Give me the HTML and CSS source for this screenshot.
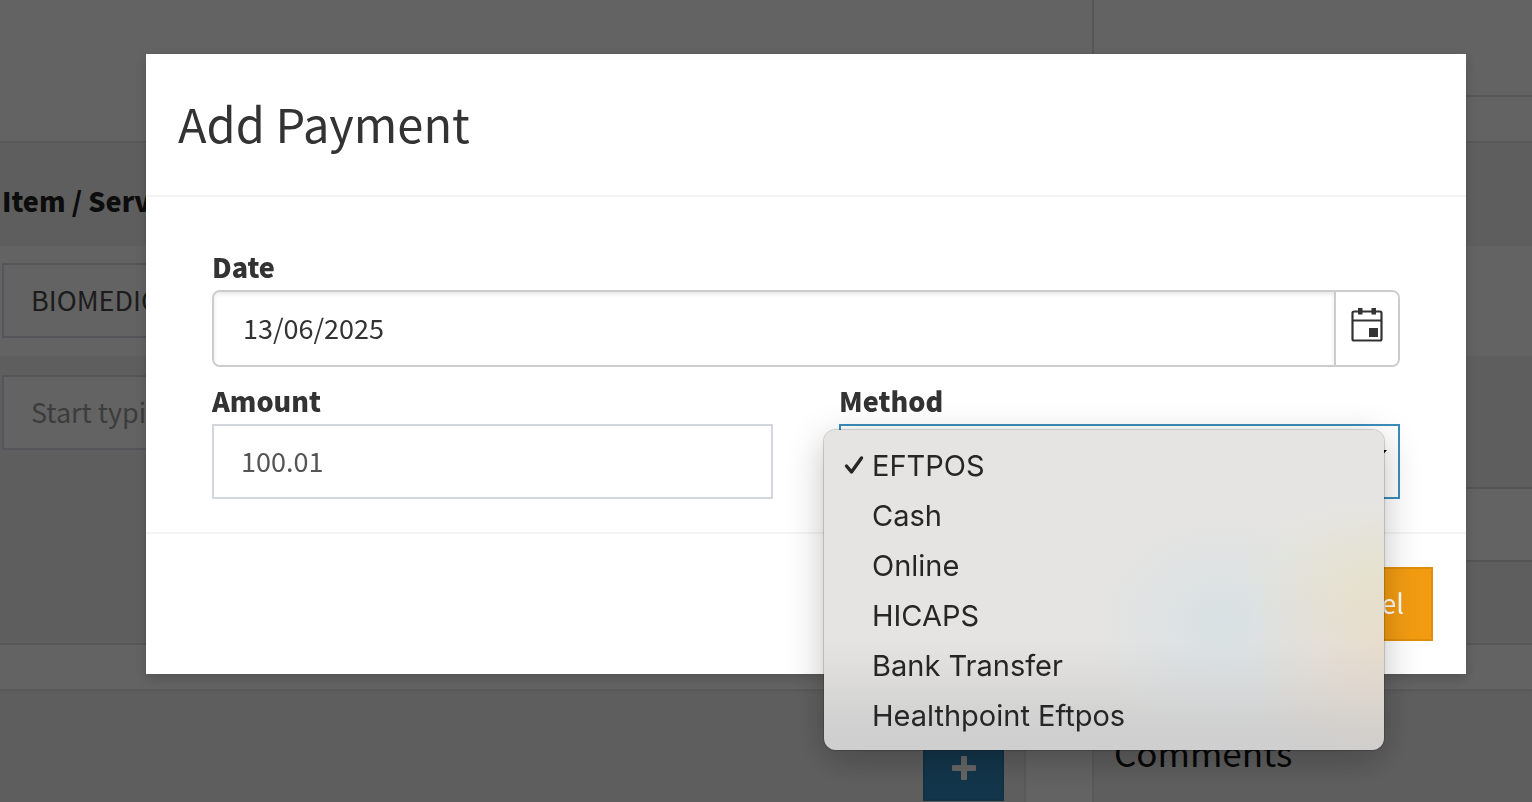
FILE: index.html
```html
<!DOCTYPE html>
<html lang="en">
<head>
  <meta charset="UTF-8">
  <meta name="viewport" content="width=device-width, initial-scale=1.0">
  <title>Invoice - Add Payment</title>
  <link rel="stylesheet" href="styles.css">
</head>
<body>
  <div class="page">
    <div class="top-row">
      <div class="top-main"></div>
      <div class="top-side">
        <div class="top-side-body"></div>
      </div>
    </div>

    <table class="items">
      <thead>
        <tr><th scope="col">Item / Service</th></tr>
      </thead>
      <tbody>
        <tr><td><input type="text" class="item-input" aria-label="Item 1" value="BIOMEDICA"></td></tr>
        <tr><td><input type="text" class="item-input" aria-label="Item 2" placeholder="Start typing"></td></tr>
      </tbody>
    </table>
    <div class="totals">
      <div class="total-row shaded"></div>
      <div class="total-row"></div>
    </div>

    <div class="bottom-row">
      <div class="panel panel-main">
        <button type="button" class="add-btn" aria-label="Add">
          <svg width="26" height="26" viewBox="0 0 26 26"><path d="M11 1h4a1 1 0 0 1 1 1v8h8a1 1 0 0 1 1 1v4a1 1 0 0 1-1 1h-8v8a1 1 0 0 1-1 1h-4a1 1 0 0 1-1-1v-8H2a1 1 0 0 1-1-1v-4a1 1 0 0 1 1-1h8V2a1 1 0 0 1 1-1z" fill="#fff"/></svg>
        </button>
      </div>
      <div class="panel panel-side">
        <h3>Comments</h3>
      </div>
    </div>
  </div>

  <div class="overlay">
    <div class="modal" role="dialog" aria-labelledby="modal-title">
      <div class="modal-header">
        <h2 id="modal-title">Add Payment</h2>
      </div>
      <div class="modal-body">
        <div class="field">
          <label for="date">Date</label>
          <div class="date-group">
            <input type="text" id="date" value="13/06/2025">
            <button type="button" aria-label="Open calendar">
              <svg width="32" height="34" viewBox="0 0 32 34">
                <rect x="1.500" y="3.500" width="29" height="29" rx="1.500" fill="none" stroke="#333" stroke-width="2.200"/>
                <path d="M1 12.500h30" stroke="#333" stroke-width="2.200"/>
                <path d="M7 0h4.500v6.500H7zM20.500 0H25v6.500h-4.500zM18 20h9v9h-9z" fill="#333"/>
              </svg>
            </button>
          </div>
        </div>
        <div class="field-row">
          <div class="field">
            <label for="amount">Amount</label>
            <input type="text" id="amount" class="control" value="100.01">
          </div>
          <div class="field method">
            <label for="method">Method</label>
            <div class="select-wrap">
              <select id="method" class="control">
                <option>EFTPOS</option>
                <option>Cash</option>
                <option>Online</option>
                <option>HICAPS</option>
                <option>Bank Transfer</option>
                <option>Healthpoint Eftpos</option>
              </select>
              <svg class="arrow" width="16" height="9" viewBox="0 0 16 9"><path d="M0 0h16L8 9z" fill="#000"/></svg>
              <ul class="menu" role="listbox" aria-label="Method">
                <li role="option" aria-selected="true">
                  <svg class="check" width="20" height="20" viewBox="0 0 20 20"><path d="M2.500 11l5 6L17.500 3" fill="none" stroke="#262626" stroke-width="3.400" stroke-linecap="round" stroke-linejoin="round"/></svg>
                  EFTPOS
                </li>
                <li role="option">Cash</li>
                <li role="option">Online</li>
                <li role="option">HICAPS</li>
                <li role="option">Bank Transfer</li>
                <li role="option">Healthpoint Eftpos</li>
              </ul>
            </div>
          </div>
        </div>
      </div>
      <div class="modal-footer">
        <button type="button" class="cancel-btn">Cancel</button>
      </div>
    </div>
  </div>
</body>
</html>
```

FILE: styles.css
```css
* {
  margin: 0;
  padding: 0;
  box-sizing: border-box;
}

body {
  font-family: "Source Sans Pro", "Noto Sans CJK SC", sans-serif;
  font-size: 27px;
  line-height: 42px;
  color: #333;
  background: #f8f8f8;
  overflow: hidden;
}

input, button, select {
  font: inherit;
  color: inherit;
  border-radius: 0;
}

/* Invoice page */
.page {
  height: 100vh;
  display: flex;
  flex-direction: column;
}

.top-row {
  display: flex;
  height: 143px;
  flex-shrink: 0;
  border-bottom: 2px solid #dedede;
}

.top-main {
  flex: 1;
}

.top-side {
  width: 440px;
  border-left: 2px solid #d8d8d8;
}

.top-side-body {
  height: 97px;
  border-bottom: 2px solid #d8d8d8;
}

.items {
  width: 100%;
  border-collapse: collapse;
  background: #ececec;
}

.items th {
  height: 103px;
  padding: 12px 2px 0;
  text-align: left;
  font-weight: 900;
  color: #202020;
}

.items td {
  height: 110px;
  padding: 17px 2px 0;
  vertical-align: top;
}

.items tbody tr:first-child {
  background: #f8f8f8;
}

.items tbody tr:last-child td {
  padding-top: 19px;
}

.item-input {
  display: block;
  width: 40%;
  height: 75px;
  padding: 0 27px 2px;
  border: 2px solid #d2d6de;
  background: #f8f8f8;
  color: #484848;
}

.item-input::placeholder {
  color: #969696;
}

.totals {
  display: flex;
  flex-direction: column;
  align-items: flex-end;
  padding-top: 21px;
  background: #ececec;
  border-bottom: 2px solid #dadada;
}

.total-row {
  width: 30%;
  height: 73px;
  border-top: 2px solid #d2d3d8;
}

.total-row.shaded {
  background: #f8f8f8;
}

.total-row:last-child {
  height: 83px;
}

.bottom-row {
  flex: 1;
  display: flex;
  gap: 66px;
  margin-top: 44px;
}

.panel {
  background: #ececec;
  border-top: 2px solid #dedede;
  box-shadow: inset 0 2px 2px rgba(0, 0, 0, 0.03);
}

.panel-main {
  flex: 1;
  padding: 36px 20px 0;
  border-right: 2px solid #e0e0e0;
  text-align: right;
}

.panel-side {
  width: 440px;
  padding: 36px 20px 0;
  border-left: 2px solid #e0e0e0;
}

.panel-side h3 {
  font-size: 35px;
  font-weight: 400;
  line-height: 50px;
  color: #101010;
}

.add-btn {
  width: 81px;
  height: 74px;
  border: 2px solid #2c7aac;
  background: #3086bb;
}

.add-btn svg {
  vertical-align: middle;
}

/* Modal */
.overlay {
  position: fixed;
  inset: 0;
  padding: 54px 66px 0 146px;
  background: rgba(0, 0, 0, 0.6);
}

.modal {
  background: #fff;
  box-shadow: 0 4px 12px rgba(0, 0, 0, 0.2);
}

.modal-header {
  padding: 34px 32px 37px;
  border-bottom: 2px solid #f4f4f4;
}

.modal-header h2 {
  font-size: 47px;
  font-weight: 400;
  line-height: 70px;
}

.modal-body {
  padding: 49px 66px 33px;
}

.field label {
  display: block;
  padding-bottom: 2px;
  font-weight: 900;
}

.field-row {
  display: grid;
  grid-template-columns: 1fr 1fr;
  gap: 66px;
  margin-top: 13px;
}

.control {
  display: block;
  width: 100%;
  height: 75px;
  padding: 0 27px 2px;
  border: 2px solid #d2d6de;
  background: #fff;
  color: #555;
}

.date-group {
  display: flex;
  height: 77px;
  border: 2px solid #ccc;
  border-radius: 8px;
  overflow: hidden;
}

.date-group input {
  flex: 1;
  min-width: 0;
  padding: 0 29px 2px;
  border: none;
  box-shadow: inset 0 2px 4px rgba(0, 0, 0, 0.1);
}

.date-group button {
  width: 64px;
  padding-bottom: 8px;
  border: none;
  border-left: 2px solid #ccc;
  background: #fff;
}

.date-group svg {
  display: block;
  margin: 0 auto;
}

.select-wrap {
  position: relative;
}

.method .control {
  appearance: none;
  border-color: #3c8dbc;
}

.arrow {
  position: absolute;
  top: 26px;
  right: 13px;
}

.menu {
  position: absolute;
  top: 6px;
  left: -15px;
  right: 16px;
  padding: 11px 0 9px;
  list-style: none;
  border-radius: 12px;
  font-family: Inter, sans-serif;
  font-size: 29px;
  line-height: 50px;
  color: #262626;
  background:
    radial-gradient(ellipse 140px 130px at 100% 66%, rgba(236, 208, 175, 0.4), transparent),
    radial-gradient(ellipse 150px 80px at 100% 46%, rgba(226, 232, 195, 0.4), transparent),
    radial-gradient(ellipse 130px 110px at 71% 60%, rgba(198, 220, 230, 0.4), transparent),
    linear-gradient(#e5e4e2 66%, #cfcfcf 94%);
  box-shadow: 0 0 1px 1px rgba(0, 0, 0, 0.18), 0 10px 36px rgba(0, 0, 0, 0.25);
}

.menu li {
  position: relative;
  padding-left: 48px;
}

.check {
  position: absolute;
  top: 14px;
  left: 20px;
}

.modal-footer {
  padding: 33px;
  border-top: 2px solid #f4f4f4;
  text-align: right;
}

.cancel-btn {
  display: inline-block;
  height: 74px;
  padding: 0 27px 2px;
  border: 2px solid #e08e0b;
  background: #f39c12;
  color: #fff;
  vertical-align: top;
}
```
